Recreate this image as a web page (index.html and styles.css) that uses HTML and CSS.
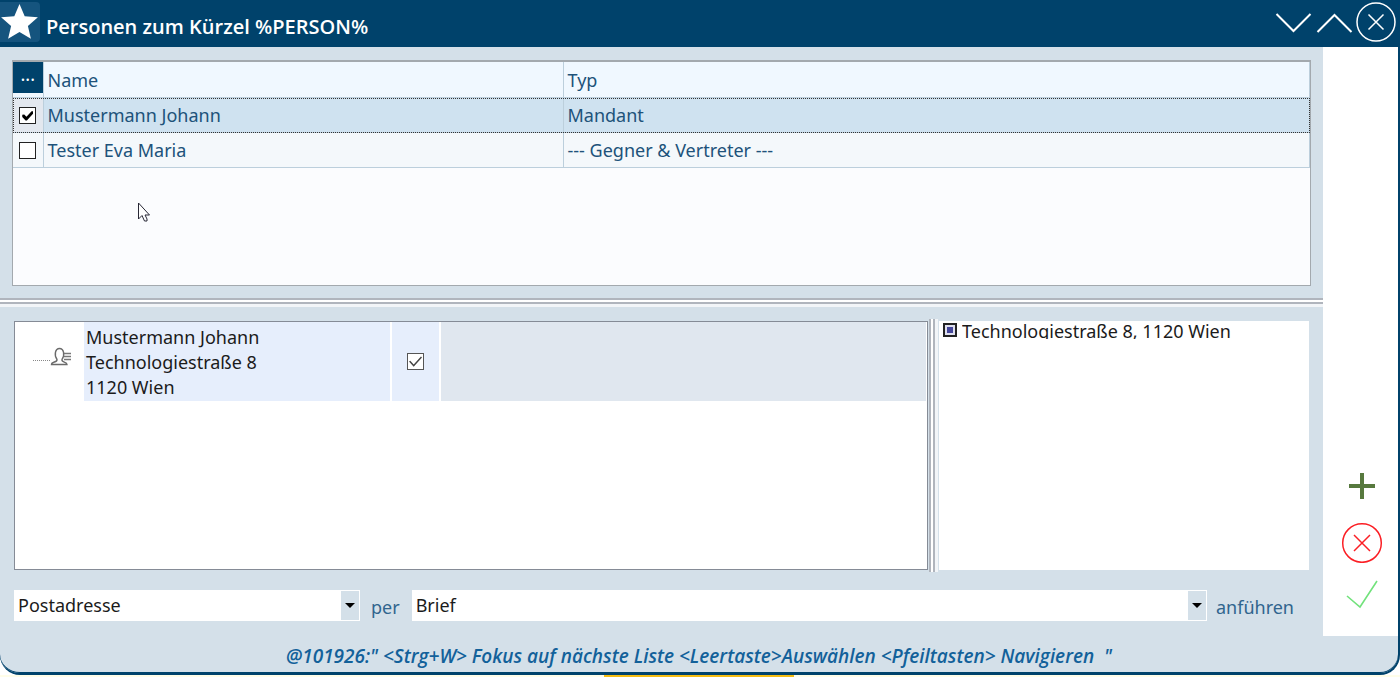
FILE: index.html
```html
<!DOCTYPE html>
<html lang="de">
<head>
<meta charset="utf-8">
<title>Personen zum Kürzel %PERSON%</title>
<link rel="stylesheet" href="styles.css">
</head>
<body>
<div class="window">
  <header class="titlebar">
    <svg class="star" viewBox="0 0 40 42" aria-hidden="true"><rect x="-4" y="2" width="44" height="40" rx="4" fill="#15547e"/><path d="M19.500 4l5.200 12.200 13.200 1.100-10 8.700 3 12.700-11.400-6.800-11.400 6.800 3-12.700-10-8.700 13.200-1.100z" fill="#fff"/></svg>
    <h1 class="title">Personen zum Kürzel %PERSON%</h1>
    <button class="icon-button" aria-label="Nach unten"><svg width="41" height="42" viewBox="0 0 41 42"><path d="M2.500 14l17 17 17-17" fill="none" stroke="#fff" stroke-width="2"/></svg></button>
    <button class="icon-button" aria-label="Nach oben"><svg width="41" height="42" viewBox="0 0 41 42"><path d="M2.500 32l17-17 17 17" fill="none" stroke="#fff" stroke-width="2"/></svg></button>
    <button class="icon-button" aria-label="Schließen"><svg width="42" height="42" viewBox="0 0 42 42"><circle cx="20" cy="22" r="19" fill="none" stroke="#fff" stroke-width="1.500"/><path d="M12.500 14.500l15 15M27.500 14.500l-15 15" stroke="#fff" stroke-width="1.500"/></svg></button>
  </header>

  <div class="content">
    <main class="main">
      <section class="persons">
        <table class="person-table">
          <thead>
            <tr><th class="col-check"><span class="more">...</span></th><th class="col-name">Name</th><th>Typ</th></tr>
          </thead>
          <tbody>
            <tr class="selected"><td class="col-check"><input class="box" type="checkbox" checked aria-label="Mustermann Johann"></td><td>Mustermann Johann</td><td>Mandant</td></tr>
            <tr><td class="col-check"><input class="box" type="checkbox" aria-label="Tester Eva Maria"></td><td>Tester Eva Maria</td><td>--- Gegner &amp; Vertreter ---</td></tr>
          </tbody>
        </table>
        <svg class="cursor" width="14" height="21" viewBox="0 0 14 21" aria-hidden="true"><path d="M1.500 1v16l3.500-3.500 2.500 5.500h2.500v-2l-2-4h4.500z" fill="#fff" stroke="#272735"/></svg>
      </section>

      <div class="splitter-h"></div>

      <section class="details">
        <div class="tree">
          <div class="tree-row">
            <div class="node"><svg width="40" height="24" viewBox="0 0 40 24" aria-hidden="true"><path d="M1 15.500h18" stroke="#888" stroke-dasharray="1 1"/><path d="M19.500 19.500c0-3 6-2 5.500-5-3-4-2-11 2.500-11s5.500 7 2.500 11c-1 3 5 2 5 5z" fill="none" stroke="#6a6a6a" stroke-width="1.400"/><path d="M32 8.500h7M32 11.500h7M32 14.500h7" stroke="#777" stroke-width="1.300"/></svg></div>
            <div class="address">Mustermann Johann<br>Technologiestraße 8<br>1120 Wien</div>
            <div class="pick"><input class="box box-soft" type="checkbox" checked aria-label="Adresse auswählen"></div>
            <div class="filler"></div>
          </div>
        </div>
        <div class="splitter-v"></div>
        <div class="preview">
          <input class="mark" type="checkbox" id="addr" checked>
          <label class="preview-text" for="addr">Technologiestraße 8, 1120 Wien</label>
        </div>
      </section>

      <form class="options">
        <span class="combo combo-kind"><select class="select" aria-label="Adressart"><option>Postadresse</option></select><span class="arrow"></span></span>
        <label class="word" for="medium">per</label>
        <span class="combo combo-medium"><select class="select" id="medium"><option>Brief</option></select><span class="arrow"></span></span>
        <span class="word">anführen</span>
      </form>
    </main>

    <aside class="actions">
      <button class="icon-button" aria-label="Hinzufügen"><svg width="42" height="42" viewBox="0 0 42 42"><path d="M21 8v26M8 21h26" stroke="#57793e" stroke-width="4"/></svg></button>
      <button class="icon-button" aria-label="Abbrechen"><svg width="42" height="42" viewBox="0 0 42 42"><circle cx="21" cy="22" r="19.300" fill="none" stroke="#fb1f25" stroke-width="1.500"/><path d="M13 14l16 16M29 14l-16 16" stroke="#fb1f25" stroke-width="1.500"/></svg></button>
      <button class="icon-button" aria-label="Bestätigen"><svg width="42" height="42" viewBox="0 0 42 42"><path d="M6 19l13 11 17-26" fill="none" stroke="#72e27c" stroke-width="1.600"/></svg></button>
    </aside>
  </div>

  <footer class="hint">@101926:" &lt;Strg+W&gt; Fokus auf nächste Liste &lt;Leertaste&gt;Auswählen &lt;Pfeiltasten&gt; Navigieren&nbsp; "</footer>
</div>
<div class="page-behind"><span class="highlight"></span></div>
</body>
</html>
```
FILE: styles.css
```css
* { box-sizing: border-box; }

body {
  margin: 0;
  min-height: 100vh;
  display: flex;
  flex-direction: column;
  overflow: hidden;
  background: #fff;
  font: 18px/25px "Noto Sans", "Open Sans", sans-serif;
  color: #1b1b1b;
}

.window {
  flex: 1;
  display: flex;
  flex-direction: column;
  background: #d4e0e9;
  border: 0 solid #00426b;
  border-width: 0 2px 2px 0;
  border-radius: 0 0 20px 20px;
  box-shadow: inset 0 -1px 0 #00426b;
  overflow: hidden;
}

.titlebar {
  display: flex;
  height: 47px;
  background: #00426b;
  color: #fff;
}
.star { width: 40px; height: 42px; }
.title {
  flex: 1;
  margin: 0;
  padding: 14px 0 0 6px;
  font-family: "Open Sans", sans-serif;
  font-size: 20px;
  line-height: 25px;
  font-weight: 600;
}
.icon-button {
  display: block;
  padding: 0;
  border: 0;
  background: none;
  height: 42px;
}
.icon-button svg { display: block; }

.content { flex: 1; display: flex; }
.main {
  flex: 1;
  min-width: 0;
  display: flex;
  flex-direction: column;
}

.persons {
  position: relative;
  height: 226px;
  margin: 13px 12px 12px;
  border: 1px solid #a3a9ae;
  border-top-width: 2px;
  background: #fbfcfe;
}
.person-table {
  width: 100%;
  table-layout: fixed;
  border-collapse: collapse;
  color: #20527a;
}
.person-table th,
.person-table td {
  height: 35px;
  padding: 0 4px;
  border: 1px solid #bccfdc;
  border-top: 0;
  border-left: 0;
  font-weight: 400;
  text-align: left;
}
.person-table th { padding-top: 2px; background: #f0f8ff; }
.person-table td { background: #f4f8fb; }
.person-table .selected td { background: #cfe2f0; }
.person-table .selected { outline: 1px dotted #333; outline-offset: -1px; }
.person-table .col-check { width: 30px; padding: 0; text-align: center; }
.person-table td.col-check { padding-bottom: 2px; }
.person-table .selected .col-check { background: #e3e8ef; }
.person-table .col-name { width: 520px; }
.more {
  display: block;
  height: 31px;
  margin-bottom: 4px;
  background: #00426b;
  color: #fff;
}

.box {
  appearance: none;
  display: inline-grid;
  place-content: center;
  width: 17px;
  height: 17px;
  margin: 0;
  border: 1px solid #222;
  background: #fff;
  vertical-align: middle;
}
.box:checked::before {
  content: "";
  width: 11px;
  height: 10px;
  background: #000;
  clip-path: polygon(0 40%, 18% 38%, 38% 62%, 85% 5%, 100% 5%, 100% 28%, 42% 98%, 30% 98%, 0 64%);
}
.box-soft { border-color: #555; }
.box-soft:checked::before {
  width: 13px;
  height: 12px;
  background: #444;
  clip-path: polygon(0 50%, 10% 44%, 36% 74%, 92% 8%, 100% 16%, 36% 94%);
}

.cursor { position: absolute; left: 124px; top: 140px; }

.splitter-h {
  height: 9px;
  border-top: 2px solid #b0b5bd;
  border-bottom: 3px solid #f2f5f8;
  background: linear-gradient(#fff 50%, #b0b5bd 50%);
}

.details {
  flex: 1;
  display: flex;
  margin: 12px 14px 18px;
}
.tree {
  flex: 1;
  margin: 2px 0;
  border: 1px solid #858b96;
  background: #fff;
}
.tree-row { display: flex; gap: 2px; height: 79px; margin: 0 1px 0 0; }
.node { width: 67px; padding: 23px 0 0 17px; }
.address { width: 306px; padding: 3px 2px 0; background: #e6eefc; }
.pick { width: 47px; display: grid; place-items: center; background: #e6eefc; }
.filler { flex: 1; background: #e0e7ef; }
.splitter-v {
  width: 9px;
  margin: 0 1px;
  border-left: 2px solid #b0b5bd;
  border-right: 3px solid #f2f5f8;
  background: linear-gradient(90deg, #fff 50%, #b0b5bd 50%);
}
.preview {
  width: 370px;
  margin: 2px 0;
  padding: 0 4px;
  display: flex;
  gap: 5px;
  background: #fff;
}
.mark {
  appearance: none;
  width: 14px;
  height: 14px;
  margin: 2px 0 0;
  border: 2px solid #222;
  background: #44469a;
  box-shadow: inset 0 0 0 2px #dfe0ee;
}
.preview-text {
  height: 18px;
  overflow: hidden;
  line-height: 21px;
}

.options {
  display: flex;
  align-items: center;
  margin: 0 14px 15px;
}
.combo { position: relative; height: 31px; }
.combo-kind { width: 346px; }
.combo-medium { flex: 1; }
.select {
  appearance: none;
  width: 100%;
  height: 31px;
  padding: 0 24px 0 4px;
  border: 0;
  border-radius: 0;
  background: #fff;
  color: #1b1b1b;
  font: inherit;
}
.arrow {
  position: absolute;
  top: 1px;
  right: 1px;
  width: 18px;
  height: 29px;
  display: grid;
  place-items: center;
  background: #d4e0e9;
  pointer-events: none;
}
.arrow::before {
  content: "";
  border: 5px solid transparent;
  border-top-color: #000;
  border-bottom: 0;
}
.word { padding: 4px 12px 0 11px; color: #30658e; }
.word:last-child { padding: 4px 15px 0 9px; }

.actions {
  width: 75px;
  display: flex;
  flex-direction: column;
  align-items: center;
  justify-content: flex-end;
  gap: 14px;
  padding: 0 0 17px 2px;
  background: #fff;
}

.hint {
  height: 37px;
  padding-top: 8px;
  text-align: center;
  font-family: "Open Sans", sans-serif;
  font-size: 19px;
  font-style: italic;
  font-weight: 600;
  color: #12619a;
}

.page-behind { height: 2px; background: #fffde8; }
.highlight {
  display: block;
  width: 190px;
  height: 2px;
  margin-left: 604px;
  background: #f5bd12;
}
```
